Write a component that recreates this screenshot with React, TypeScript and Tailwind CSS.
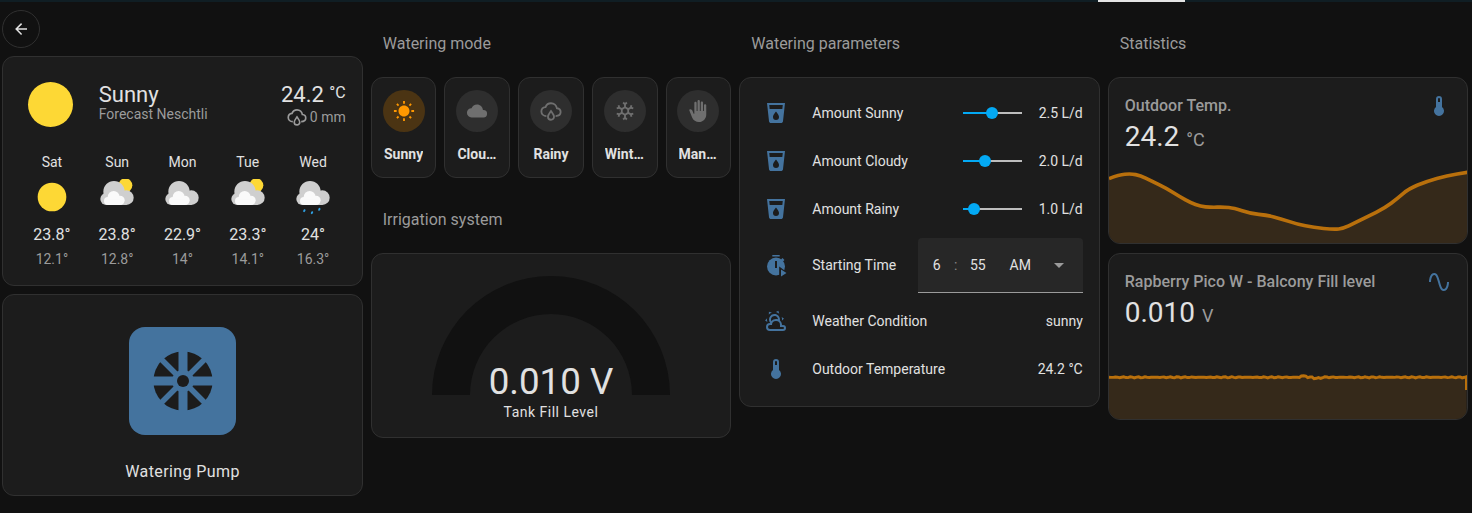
import React from 'react';

const FONT = "font-['Roboto','Liberation_Sans',sans-serif]";

const mdi = {
  arrowLeft: 'M20,11V13H8L13.5,18.5L12.08,19.92L4.16,12L12.08,4.08L13.5,5.5L8,11H20Z',
  sun: 'M3.55 19.09L4.96 20.5L6.76 18.71L5.34 17.29M12 6C8.69 6 6 8.69 6 12S8.69 18 12 18 18 15.31 18 12C18 8.68 15.31 6 12 6M20 13H23V11H20M17.24 18.71L19.04 20.5L20.45 19.09L18.66 17.29M20.45 5L19.04 3.6L17.24 5.39L18.66 6.81M13 1H11V4H13M6.76 5.39L4.96 3.6L3.55 5L5.34 6.81L6.76 5.39M1 13H4V11H1M13 20H11V23H13',
  cloud: 'M6,19A5,5 0 0,1 1,14A5,5 0 0,1 6,9C7,6.65 9.3,5 12,5C15.43,5 18.24,7.66 18.5,11.03L19,11A4,4 0 0,1 23,15A4,4 0 0,1 19,19H6Z',
  snow: 'M20.79,13.95L18.46,14.57L16.46,13.44V10.56L18.46,9.43L20.79,10.05L21.31,8.12L19.54,7.65L20,5.88L18.07,5.36L17.45,7.69L15.45,8.82L13,7.38V5.12L14.71,3.41L13.29,2L12,3.29L10.71,2L9.29,3.41L11,5.12V7.38L8.5,8.82L6.5,7.69L5.92,5.36L4,5.88L4.47,7.65L2.7,8.12L3.22,10.05L5.55,9.43L7.55,10.56V13.45L5.55,14.58L3.22,13.96L2.7,15.89L4.47,16.36L4,18.12L5.93,18.64L6.55,16.31L8.55,15.18L11,16.62V18.88L9.29,20.59L10.71,22L12,20.71L13.29,22L14.7,20.59L13,18.88V16.62L15.5,15.17L17.5,16.3L18.12,18.63L20,18.12L19.53,16.35L21.3,15.88L20.79,13.95M9.5,10.56L12,9.11L14.5,10.56V13.44L12,14.89L9.5,13.44V10.56Z',
  hand: 'M13 24C9.74 24 6.81 22 5.6 19L2.57 11.37C2.26 10.58 3 9.79 3.81 10.05L4.6 10.31C5.16 10.5 5.62 10.92 5.84 11.47L7.25 15H8V3.25C8 2.56 8.56 2 9.25 2S10.5 2.56 10.5 3.25V12H11.5V1.25C11.5 .56 12.06 0 12.75 0S14 .56 14 1.25V12H15V2.75C15 2.06 15.56 1.5 16.25 1.5C16.94 1.5 17.5 2.06 17.5 2.75V12H18.5V5.75C18.5 5.06 19.06 4.5 19.75 4.5S21 5.06 21 5.75V16C21 20.42 17.42 24 13 24Z',
  cup: 'M18.32,8H5.67L5.23,4H18.77M3,2L5,20.23C5.13,21.23 5.97,22 7,22H17C18,22 18.87,21.23 19,20.23L21,2H3M12,19A3,3 0 0,1 9,16C9,14 12,10.6 12,10.6C12,10.6 15,14 15,16A3,3 0 0,1 12,19Z',
  partly: 'M12.74,5.47C15.1,6.5 16.35,9.03 15.92,11.46C17.19,12.56 18,14.19 18,16V16.17C18.31,16.06 18.65,16 19,16A3,3 0 0,1 22,19A3,3 0 0,1 19,22H6A4,4 0 0,1 2,18A4,4 0 0,1 6,14H6.27C5,12.45 4.6,10.24 5.5,8.26C6.72,5.5 9.97,4.24 12.74,5.47M11.93,7.3C10.16,6.5 8.09,7.31 7.31,9.07C6.85,10.09 6.93,11.22 7.41,12.13C8.5,10.83 10.16,10 12,10C12.7,10 13.38,10.12 14,10.34C13.94,9.06 13.18,7.86 11.93,7.3M13.55,3.64C13,3.4 12.45,3.23 11.88,3.12L14.37,1.82L15.27,4.71C14.76,4.29 14.19,3.93 13.55,3.64M6.09,4.44C5.6,4.79 5.17,5.19 4.8,5.63L4.91,2.82L7.87,3.5C7.25,3.71 6.65,4.03 6.09,4.44M18,9.71C17.91,9.12 17.78,8.55 17.59,8L19.97,9.5L17.92,11.73C18.03,11.08 18.05,10.4 18,9.71M3.04,11.3C3.11,11.9 3.24,12.47 3.43,13L1.06,11.5L3.1,9.28C3,9.93 2.97,10.61 3.04,11.3M19,18H16V16A4,4 0 0,0 12,12A4,4 0 0,0 8,16H6A2,2 0 0,0 4,18A2,2 0 0,0 6,20H19A1,1 0 0,0 20,19A1,1 0 0,0 19,18Z',
  thermometer: 'M15 13V5A3 3 0 0 0 9 5V13A5 5 0 1 0 15 13M12 4A1 1 0 0 1 13 5V8H11V5A1 1 0 0 1 12 4Z',
  sine: 'M16.5,21C13.5,21 12.31,16.76 11.05,12.28C10.14,9.04 9,5 7.5,5C4.11,5 4,11.93 4,12H2C2,11.63 2.06,3 7.5,3C10.5,3 11.71,7.25 12.97,11.74C13.83,14.8 15,19 16.5,19C19.94,19 20.03,12.07 20.03,12H22.03C22.03,12.37 21.97,21 16.5,21Z',
};

const Icon = ({ d, className }: { d: string; className: string }) => (
  <svg viewBox="0 0 24 24" fill="currentColor" className={className}>
    <path d={d} />
  </svg>
);

const RainDrop = ({ className }: { className: string }) => (
  <svg viewBox="0 0 24 24" fill="none" stroke="currentColor" strokeWidth="2" className={className}>
    <path d="M7 17.5C3.8 17.5 1.5 15.2 1.5 12.5C1.5 10 3.4 8 6 7.7C7 5.1 9.3 3.5 12 3.5C15.3 3.5 18 5.9 18.4 9C20.8 9.2 22.5 11 22.5 13.2C22.5 15.6 20.6 17.5 17 17.5" />
    <path d="M12 12C10 14.8 8.7 16.3 8.7 18.2A3.3 3.3 0 0 0 15.3 18.2C15.3 16.3 14 14.8 12 12Z" />
  </svg>
);

const TimerPlay = ({ className }: { className: string }) => (
  <svg viewBox="0 0 24 24" className={className}>
    <rect x="8.3" y="2" width="7.4" height="1.5" fill="#44739e" />
    <rect x="17.6" y="5.4" width="2.2" height="2.8" transform="rotate(-45 18.7 6.8)" fill="#44739e" />
    <circle cx="12" cy="13.5" r="9" fill="#44739e" />
    <rect x="11" y="8" width="2" height="7" fill="#1c1c1c" />
    <path d="M15.2 13.6L24 20L15.2 26Z" fill="#1c1c1c" />
    <path d="M17 16.5L22.5 20L17 23.5Z" fill="#44739e" />
  </svg>
);

const PumpIcon = () => (
  <svg viewBox="0 0 60 60" className="h-[60px] w-[60px]">
    <circle cx="30" cy="30" r="29.6" fill="#1c1c1c" />
    <path d="M30 0V60M0 30H60" stroke="#44739e" strokeWidth="9" />
    <path d="M8 8L52 52M52 8L8 52" stroke="#44739e" strokeWidth="5.5" />
    <circle cx="30" cy="30" r="11" fill="#44739e" />
    <circle cx="30" cy="30" r="6" fill="#1c1c1c" />
  </svg>
);

const ForecastIcon = ({ kind }: { kind: string }) => {
  if (kind === 'sunny') {
    return (
      <svg viewBox="0 0 108 108" className="h-9 w-9">
        <circle cx="54" cy="54" r="43" fill="#fdd835" />
      </svg>
    );
  }
  return (
    <svg viewBox="0 0 108 108" className="h-9 w-9">
      {kind === 'partly' && <circle cx="79" cy="19" r="21" fill="#fdd835" />}
      <g fill="#cfcfcf">
        <circle cx="45" cy="38" r="32" />
        <circle cx="22" cy="60" r="18" />
        <circle cx="82" cy="56" r="22" />
        <rect x="22" y="50" width="60" height="28" />
      </g>
      <g fill="#fafafa">
        <circle cx="44" cy="54" r="18" />
        <circle cx="27" cy="66" r="12" />
        <circle cx="63" cy="64" r="14" />
        <rect x="27" y="62" width="36" height="16" />
      </g>
      {kind === 'rain' && (
        <g fill="#2f9fe0">
          <ellipse cx="28" cy="95" rx="3.2" ry="4.6" transform="rotate(25 28 95)" />
          <ellipse cx="51" cy="101" rx="3.2" ry="4.6" transform="rotate(25 51 101)" />
          <ellipse cx="73" cy="91" rx="3.2" ry="4.6" transform="rotate(25 73 91)" />
        </g>
      )}
    </svg>
  );
};

const forecast = [
  { day: 'Sat', kind: 'sunny', high: '23.8°', low: '12.1°' },
  { day: 'Sun', kind: 'partly', high: '23.8°', low: '12.8°' },
  { day: 'Mon', kind: 'cloudy', high: '22.9°', low: '14°' },
  { day: 'Tue', kind: 'partly', high: '23.3°', low: '14.1°' },
  { day: 'Wed', kind: 'rain', high: '24°', low: '16.3°' },
];

const cardClass = 'rounded-xl border border-[#303030] bg-[#1c1c1c]';

const SectionTitle = ({ children, className = '' }: { children: React.ReactNode; className?: string }) => (
  <h2 className={`h-6 mb-[21px] pl-3 text-base leading-6 font-normal text-[#9b9b9b] ${className}`}>{children}</h2>
);

const WeatherCard = () => (
  <div className={`${cardClass} h-[230px] p-4`}>
    <div className="flex h-16 mb-[15px] items-start">
      <div className="ml-[9px] mt-[9px] h-[45px] w-[45px] rounded-full bg-[#fdd835]" />
      <div className="ml-[25.5px] mt-[10px]">
        <div className="text-[22px] leading-[23px] text-[#e1e1e1]">Sunny</div>
        <div className="text-sm leading-4 text-[#9b9b9b]">Forecast Neschtli</div>
      </div>
      <div className="ml-auto mt-[10px] text-right">
        <div className="text-[22px] leading-6 text-[#e1e1e1]">
          24.2 <span className="relative top-[-4px] text-base">°C</span>
        </div>
        <div className="mt-[-2px] flex items-center justify-end gap-[3px] text-sm leading-5 text-[#9b9b9b]">
          <RainDrop className="h-5 w-5" />
          <span>0 mm</span>
        </div>
      </div>
    </div>
    <div className="grid grid-cols-5">
      {forecast.map((f) => (
        <div key={f.day} className="flex flex-col items-center">
          <div className="h-5 text-sm leading-5 text-[#e1e1e1]">{f.day}</div>
          <div className="mt-[7px] h-9">
            <ForecastIcon kind={f.kind} />
          </div>
          <div className="mt-2 h-6 text-base leading-6 text-[#e1e1e1]">{f.high}</div>
          <div className="mt-[2px] h-5 text-sm leading-5 text-[#9b9b9b]">{f.low}</div>
        </div>
      ))}
    </div>
  </div>
);

const PumpCard = () => (
  <div className={`${cardClass} mt-2 flex h-[202px] flex-col items-center pt-8`}>
    <div className="flex h-[108px] w-[107px] items-center justify-center rounded-2xl bg-[#44739e]">
      <PumpIcon />
    </div>
    <div className="mt-[25px] text-base leading-6 tracking-[0.4px] text-[#e1e1e1]">Watering Pump</div>
  </div>
);

const modes = [
  { label: 'Sunny', active: true, icon: <Icon d={mdi.sun} className="h-[22px] w-[22px]" /> },
  { label: 'Cloudy', icon: <Icon d={mdi.cloud} className="h-[22px] w-[22px]" /> },
  { label: 'Rainy', icon: <RainDrop className="h-[22px] w-[22px]" /> },
  { label: 'Winter', icon: <Icon d={mdi.snow} className="h-[22px] w-[22px]" /> },
  { label: 'Manual', icon: <Icon d={mdi.hand} className="h-[22px] w-[22px]" /> },
];

const ModeButtons = () => (
  <div className="grid grid-cols-5 gap-2">
    {modes.map((m) => (
      <div key={m.label} className={`${cardClass} flex h-[101px] min-w-0 flex-col items-center px-3 pt-3`}>
        <div
          className={`flex h-[42px] w-[42px] shrink-0 items-center justify-center rounded-full ${
            m.active ? 'bg-[#4b3413] text-[#ff9800]' : 'bg-[#2e2e2e] text-[#6f6f6f]'
          }`}
        >
          {m.icon}
        </div>
        <div className="mt-3 w-full truncate text-center text-sm leading-5 font-bold text-[#e1e1e1]">{m.label}</div>
      </div>
    ))}
  </div>
);

const GaugeCard = () => (
  <div className={`${cardClass} flex h-[185px] justify-center pt-[22px]`}>
    <div className="relative h-[119px] w-[238px]">
      <svg viewBox="0 0 238 119" className="block h-[119px] w-[238px]">
        <path d="M0 119A119 119 0 0 1 238 119H200A81 81 0 0 0 38 119Z" fill="#111111" />
      </svg>
      <div className="absolute left-0 right-0 top-[87px] text-center text-[36.7px] leading-[38px] text-[#e1e1e1]">0.010 V</div>
      <div className="absolute left-0 right-0 top-[126px] text-center text-sm leading-5 tracking-[0.5px] text-[#e1e1e1]">Tank Fill Level</div>
    </div>
  </div>
);

const sliders = [
  { label: 'Amount Sunny', value: '2.5 L/d', pos: 29 },
  { label: 'Amount Cloudy', value: '2.0 L/d', pos: 22.7 },
  { label: 'Amount Rainy', value: '1.0 L/d', pos: 11.7 },
];

const Row = ({ icon, label, children, tall }: { icon: React.ReactNode; label: string; children: React.ReactNode; tall?: boolean }) => (
  <div className={`flex items-center ${tall ? 'h-14' : 'h-10'}`}>
    <div className="flex w-10 shrink-0 justify-center text-[#44739e]">{icon}</div>
    <div className="ml-4 flex-1 text-sm leading-5 text-[#e1e1e1]">{label}</div>
    {children}
  </div>
);

const ParametersCard = () => (
  <div className={`${cardClass} flex h-[329.5px] flex-col gap-2 px-4 pt-[15px]`}>
    {sliders.map((s) => (
      <Row key={s.label} label={s.label} icon={<Icon d={mdi.cup} className="h-6 w-6" />}>
        <div className="relative h-[2px] w-[59px] bg-[#bdbdbd]">
          <div className="h-full bg-[#03a9f4]" style={{ width: s.pos }} />
          <div className="absolute top-[-5px] h-3 w-3 rounded-full bg-[#03a9f4]" style={{ left: s.pos - 6 }} />
        </div>
        <div className="ml-4 w-[45px] whitespace-nowrap text-right text-sm leading-5 text-[#e1e1e1]">{s.value}</div>
      </Row>
    ))}
    <Row tall label="Starting Time" icon={<TimerPlay className="h-6 w-6" />}>
      <div className="flex h-[55px] w-[165px] items-center self-end rounded-t border-b border-[#9b9b9b] bg-[#272727] text-sm text-[#e1e1e1]">
        <span className="ml-2 w-[22px] text-center">6</span>
        <span className="ml-[6px] w-1 text-center text-[#8a8a8a]">:</span>
        <span className="ml-2 w-6 text-center">55</span>
        <span className="ml-3 w-[37px] text-center">AM</span>
        <span className="ml-[10px] flex w-5 justify-center">
          <span className="h-0 w-0 border-x-[5px] border-t-[5px] border-x-transparent border-t-[#9b9b9b]" />
        </span>
      </div>
    </Row>
    <Row label="Weather Condition" icon={<Icon d={mdi.partly} className="h-6 w-6" />}>
      <div className="text-sm leading-5 text-[#e1e1e1]">sunny</div>
    </Row>
    <Row label="Outdoor Temperature" icon={<Icon d={mdi.thermometer} className="h-6 w-6" />}>
      <div className="text-sm leading-5 text-[#e1e1e1]">24.2 °C</div>
    </Row>
  </div>
);

const smooth = (pts: number[][]) => {
  let d = `M${pts[0][0]} ${pts[0][1]}`;
  for (let i = 1; i < pts.length - 1; i++) {
    const mx = (pts[i][0] + pts[i + 1][0]) / 2;
    const my = (pts[i][1] + pts[i + 1][1]) / 2;
    d += ` Q${pts[i][0]} ${pts[i][1]} ${mx} ${my}`;
  }
  const last = pts[pts.length - 1];
  return `${d} L${last[0]} ${last[1]}`;
};

const tempPoints = [
  [25, 539], [55, 528], [90, 524], [120, 530], [150, 545], [200, 570], [240, 595], [270, 612], [300, 623], [330, 626],
  [370, 625], [400, 628], [450, 645], [500, 650], [540, 660], [590, 677], [640, 687], [700, 693], [730, 690], [760, 675],
  [800, 655], [855, 627], [890, 600], [925, 570], [980, 547], [1040, 530], [1102, 520],
];
const tempLine = smooth(tempPoints);

// fixed wobble for the flat voltage line, with the small bump near x=610
const voltPoints = Array.from({ length: 170 }, (_, i) => {
  const x = 25 + (i * 1074) / 169;
  const bump = Math.abs(x - 610) < 8 ? -4 : Math.abs(x - 650) < 12 ? 3 : 0;
  const y = 398 + 1 * Math.sin(i * 1.7) + 0.8 * Math.sin(i * 4.3) + bump;
  return [Math.round(x), Math.round(y * 10) / 10];
});
const voltLine = `M${voltPoints.map((p) => p.join(' ')).join(' L')}`;

const StatCard = ({ name, value, unit, icon, children, className = '' }: {
  name: string; value: string; unit: string; icon: string; children: React.ReactNode; className?: string;
}) => (
  <div className={`${cardClass} flex h-[167px] flex-col overflow-hidden ${className}`}>
    <div className="relative px-4 pt-[18px]">
      <div className="h-5 text-base leading-5 font-medium text-[#9b9b9b]">{name}</div>
      <div className="mt-[3px] h-9 text-[28px] leading-9 text-[#e1e1e1]">
        {value}
        <span className="ml-[7px] text-lg text-[#9b9b9b]">{unit}</span>
      </div>
      <div className="absolute right-4 top-[16px] text-[#44739e]">
        <Icon d={icon} className="h-6 w-6" />
      </div>
    </div>
    <div className="mt-auto">{children}</div>
  </div>
);

const App = () => (
  <div className={`${FONT} h-[513px] w-[1472px] overflow-hidden bg-[#111111]`}>
    <div className="flex h-[2px] bg-[#101e24]">
      <div className="w-[1098px]" />
      <div className="w-[87px] bg-[#e4e4e4]" />
    </div>
    <div className="flex gap-2 pl-[2.25px]">
      <div className="w-[360.5px] pt-2">
        <div className="mb-2 flex h-[38px] w-[38px] items-center justify-center rounded-full border border-[#303030] text-[#e1e1e1]">
          <Icon d={mdi.arrowLeft} className="h-[18px] w-[18px]" />
        </div>
        <WeatherCard />
        <PumpCard />
      </div>
      <div className="w-[360.5px] pt-[30px]">
        <SectionTitle>Watering mode</SectionTitle>
        <ModeButtons />
        <SectionTitle className="mt-[30px]">Irrigation system</SectionTitle>
        <GaugeCard />
      </div>
      <div className="w-[360.5px] pt-[30px]">
        <SectionTitle>Watering parameters</SectionTitle>
        <ParametersCard />
      </div>
      <div className="w-[360.5px] pt-[30px]">
        <SectionTitle>Statistics</SectionTitle>
        <StatCard name="Outdoor Temp." value="24.2" unit="°C" icon={mdi.thermometer}>
          <svg viewBox="25 510 1077 224" preserveAspectRatio="none" className="block h-[74px] w-full">
            <path d={`${tempLine} L1102 734 L25 734 Z`} fill="#35291a" />
            <path d={tempLine} fill="none" stroke="#b9700c" strokeWidth="11" />
          </svg>
        </StatCard>
        <StatCard className="mt-[9px]" name="Rapberry Pico W - Balcony Fill level" value="0.010" unit="V" icon={mdi.sine}>
          <svg viewBox="25 385 1077 140" preserveAspectRatio="none" className="block h-[46px] w-full">
            <path d={`${voltLine} L1099 525 L25 525 Z`} fill="#35291a" />
            <path d={`${voltLine} L1099 437`} fill="none" stroke="#b9700c" strokeWidth="9" />
          </svg>
        </StatCard>
      </div>
    </div>
  </div>
);

export default App;
